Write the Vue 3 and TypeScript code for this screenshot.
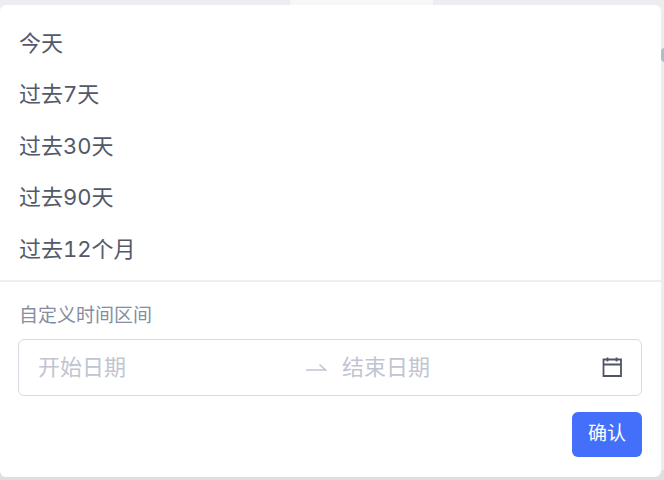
<script setup lang="ts">
const presets: string[] = ['今天', '过去7天', '过去30天', '过去90天', '过去12个月']
</script>

<template>
  <div class="page">
    <div class="backdrop-tab"></div>
    <div class="backdrop-dot"></div>
    <div class="panel">
      <ul class="presets">
        <li v-for="item in presets" :key="item" class="preset">{{ item }}</li>
      </ul>
      <div class="custom">
        <div class="label">自定义时间区间</div>
        <div class="range">
          <span class="date start">开始日期</span>
          <svg class="sep" width="22" height="10" viewBox="0 0 22 10" fill="none">
            <path d="M1 8H20.5L14.5 2.5" stroke="#c1c5d2" stroke-width="1.5" />
          </svg>
          <span class="date end">结束日期</span>
          <svg class="calendar" width="22" height="22" viewBox="0 0 22 22" fill="none" stroke="#4e5463" stroke-width="1.8">
            <path d="M2.5 3.5H20V20H2.5ZM2.5 8.5H20M6.5 1.5V5.5M15.5 1.5V5.5" />
          </svg>
        </div>
        <div class="actions">
          <button class="confirm" type="button">确认</button>
        </div>
      </div>
    </div>
  </div>
</template>

<style>
html, body { margin: 0; padding: 0; background: #e9eaee; }
</style>

<style scoped>
.page {
  position: relative;
  box-sizing: border-box;
  width: 664px;
  height: 480px;
  padding: 5px 3px 3px 0;
  overflow: hidden;
  background: linear-gradient(#ecedf1 0 470px, #dedfe3 470px);
  font-family: Inter, "Noto Sans CJK SC", sans-serif;
}
.backdrop-tab {
  position: absolute;
  left: 290px;
  top: 0;
  width: 143px;
  height: 5px;
  background: #f7f7f8;
}
.backdrop-dot {
  position: absolute;
  right: -5px;
  top: 48px;
  width: 9px;
  height: 14px;
  border-radius: 50%;
  background: #b5b9c8;
}
.panel {
  position: relative;
  height: 472px;
  display: flex;
  flex-direction: column;
  background: #fff;
  border-radius: 6px;
}
.presets {
  list-style: none;
  margin: 0;
  padding: 13px 0 5px;
  border-bottom: 2px solid #eeeef0;
}
.preset {
  height: 51.4px;
  line-height: 50px;
  padding-left: 19px;
  font-size: 22px;
  font-variant-numeric: tabular-nums;
  color: #535969;
}
.custom {
  padding: 20px 19px 0 18px;
}
.label {
  padding-left: 1px;
  height: 28px;
  line-height: 28px;
  font-size: 19px;
  color: #878da1;
}
.range {
  box-sizing: border-box;
  display: flex;
  align-items: center;
  height: 57px;
  margin-top: 9px;
  padding: 0 18px 0 19px;
  border: 1px solid #d9dae4;
  border-radius: 6px;
}
.date {
  font-size: 22px;
  color: #c1c5d2;
  white-space: nowrap;
  line-height: 50px;
}
.sep {
  margin-left: 179px;
}
.end {
  margin-left: 15px;
}
.calendar {
  margin-left: auto;
}
.actions {
  display: flex;
  justify-content: flex-end;
  margin-top: 16px;
}
.confirm {
  width: 70px;
  height: 45px;
  border: none;
  border-radius: 6px;
  background: #446ffb;
  color: #fff;
  font: inherit;
  font-size: 19px;
  line-height: 43px;
  padding: 0 0 1px;
}
</style>
